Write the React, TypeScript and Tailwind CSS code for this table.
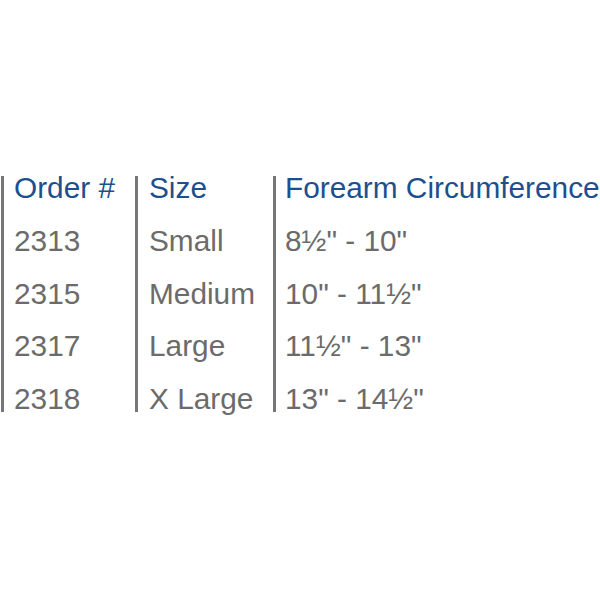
const rows = [
  { order: "2313", size: "Small", range: "8½\" - 10\"" },
  { order: "2315", size: "Medium", range: "10\" - 11½\"" },
  { order: "2317", size: "Large", range: "11½\" - 13\"" },
  { order: "2318", size: "X Large", range: "13\" - 14½\"" },
];

const cols = [
  { head: "Order #", key: "order" as const, box: "w-[134px] ml-px", pad: "pl-[10px]" },
  { head: "Size", key: "size" as const, box: "w-[138px]", pad: "pl-[11px]" },
  { head: "Forearm Circumference", key: "range" as const, box: "flex-1", pad: "pl-[9px]" },
];

export default function App() {
  return (
    <div className="w-[600px] h-[600px] bg-white overflow-hidden pt-[176px] font-['Liberation_Sans',Arial,sans-serif]">
      <div className="flex">
        {cols.map((c) => (
          <div key={c.head} className={`${c.box} shrink-0 h-[236px] border-l-[3px] border-[#777777]`}>
            <div className={`-mt-[14px] ${c.pad} text-[29.8px] leading-[52.75px] whitespace-nowrap`}>
              <div className="text-[#1d4f8e]">{c.head}</div>
              {rows.map((r) => (
                <div key={r.order} className="text-[#6b6b6b]">
                  {r[c.key]}
                </div>
              ))}
            </div>
          </div>
        ))}
      </div>
    </div>
  );
}
